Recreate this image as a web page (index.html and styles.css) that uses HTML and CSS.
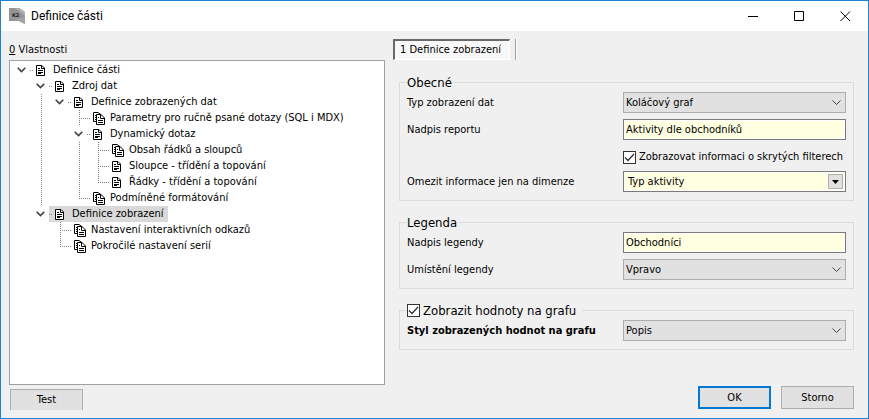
FILE: index.html
```html
<!DOCTYPE html>
<html lang="cs">
<head>
  <meta charset="utf-8">
  <meta name="viewport" content="width=device-width, initial-scale=1">
  <title>Definice části</title>
  <link rel="stylesheet" href="styles.css">
</head>
<body>
<svg class="defs" width="0" height="0" aria-hidden="true">
  <symbol id="doc" viewBox="0 0 13 13">
    <path d="M.5 1.500H6L8.500 4V11.500H.5Z" fill="#fff" stroke="#000"/>
    <path d="M5.500 2V4.500H8M2 4.500H4M2 6.500H7M2 8.500H7M2 9.500H5" fill="none" stroke="#000"/>
  </symbol>
  <symbol id="docs" viewBox="0 0 13 13">
    <path d="M.5 .5H5L8.500 3V9.500H.5Z" fill="#fff" stroke="#000"/>
    <path d="M2 3.500H3M2 5.500H3M2 7.500H3" stroke="#000"/>
    <path d="M3.500 2.500H8L11.500 6V12.500H3.500Z" fill="#fff" stroke="#000"/>
    <path d="M7.500 3V6.500H11M5 5.500H6M5 8.500H10M5 10.500H10" fill="none" stroke="#000"/>
  </symbol>
  <symbol id="open" viewBox="0 0 9 6">
    <path d="M.7 .8L4.500 4.600L8.300 .8" fill="none" stroke="#404040" stroke-width="1.600"/>
  </symbol>
</svg>

<div class="window">
  <header class="titlebar">
    <svg class="logo" width="16" height="16" viewBox="0 0 16 16">
      <path d="M0 0H10L16 4V16L10 13H0Z" fill="#949494"/>
      <path d="M0 0H10L16 4V8L6 0Z" fill="#adadad"/>
      <path d="M0 9L10 13L16 16V9L8 11Z" fill="#a3a3a3"/>
      <text x="3" y="9" class="logo-text">K2</text>
    </svg>
    <h1>Definice části</h1>
    <div class="window-buttons">
      <button type="button" aria-label="Minimalizovat">
        <svg width="11" height="11"><path d="M0 5.500H10" stroke="#000"/></svg>
      </button>
      <button type="button" aria-label="Maximalizovat">
        <svg width="11" height="11"><path d="M.5 .5H9.500V9.500H.5Z" fill="none" stroke="#000"/></svg>
      </button>
      <button type="button" aria-label="Zavřít">
        <svg width="11" height="11"><path d="M.5 .5L10 10M10 .5L.5 10" stroke="#000"/></svg>
      </button>
    </div>
  </header>

  <main class="content">
    <section class="left">
      <h2 class="caption"><u>0</u> Vlastnosti</h2>
      <div class="tree">
        <ul>
          <li>
            <div class="row parent"><i><svg><use href="#open"/></svg></i><span><svg><use href="#doc"/></svg>Definice části</span></div>
            <ul>
              <li>
                <div class="row parent"><i><svg><use href="#open"/></svg></i><span><svg><use href="#doc"/></svg>Zdroj dat</span></div>
                <ul>
                  <li>
                    <div class="row parent"><i><svg><use href="#open"/></svg></i><span><svg><use href="#doc"/></svg>Definice zobrazených dat</span></div>
                    <ul>
                      <li><div class="row"><i></i><span><svg><use href="#docs"/></svg>Parametry pro ručně psané dotazy (SQL i MDX)</span></div></li>
                      <li>
                        <div class="row parent"><i><svg><use href="#open"/></svg></i><span><svg><use href="#doc"/></svg>Dynamický dotaz</span></div>
                        <ul>
                          <li><div class="row"><i></i><span><svg><use href="#docs"/></svg>Obsah řádků a sloupců</span></div></li>
                          <li><div class="row"><i></i><span><svg><use href="#doc"/></svg>Sloupce - třídění a topování</span></div></li>
                          <li><div class="row"><i></i><span><svg><use href="#doc"/></svg>Řádky - třídění a topování</span></div></li>
                        </ul>
                      </li>
                      <li><div class="row"><i></i><span><svg><use href="#docs"/></svg>Podmíněné formátování</span></div></li>
                    </ul>
                  </li>
                </ul>
              </li>
              <li>
                <div class="row parent selected"><i><svg><use href="#open"/></svg></i><span><svg><use href="#doc"/></svg>Definice zobrazení</span></div>
                <ul>
                  <li><div class="row"><i></i><span><svg><use href="#docs"/></svg>Nastavení interaktivních odkazů</span></div></li>
                  <li><div class="row"><i></i><span><svg><use href="#docs"/></svg>Pokročilé nastavení serií</span></div></li>
                </ul>
              </li>
            </ul>
          </li>
        </ul>
      </div>
      <button type="button" class="btn btn-test">Test</button>
    </section>

    <form class="right">
      <div class="tabs">
        <button type="button" class="tab">1 Definice zobrazení</button>
      </div>

      <fieldset>
        <legend>Obecné</legend>
        <div class="field">
          <label for="typ">Typ zobrazení dat</label>
          <select id="typ"><option>Koláčový graf</option></select>
        </div>
        <div class="field">
          <label for="nadpis">Nadpis reportu</label>
          <input type="text" id="nadpis" value="Aktivity dle obchodníků">
        </div>
        <div class="field check-field">
          <label class="check"><input type="checkbox" checked>Zobrazovat informaci o skrytých filterech</label>
        </div>
        <div class="field">
          <label for="omezit">Omezit informace jen na dimenze</label>
          <select id="omezit" class="lookup"><option>Typ aktivity</option></select>
        </div>
      </fieldset>

      <fieldset>
        <legend>Legenda</legend>
        <div class="field">
          <label for="legenda">Nadpis legendy</label>
          <input type="text" id="legenda" value="Obchodníci">
        </div>
        <div class="field">
          <label for="umisteni">Umístění legendy</label>
          <select id="umisteni"><option>Vpravo</option></select>
        </div>
      </fieldset>

      <fieldset>
        <legend class="legend-check"><label class="check"><input type="checkbox" checked>Zobrazit hodnoty na grafu</label></legend>
        <div class="field">
          <label for="styl" class="strong">Styl zobrazených hodnot na grafu</label>
          <select id="styl"><option>Popis</option></select>
        </div>
      </fieldset>

      <div class="actions">
        <button type="submit" class="btn btn-ok">OK</button>
        <button type="button" class="btn">Storno</button>
      </div>
    </form>
  </main>
</div>
</body>
</html>
```

FILE: styles.css
```css
* {
  box-sizing: border-box;
}

body {
  margin: 0;
  font: 11px/16px Tahoma, "DejaVu Sans Condensed", sans-serif;
  color: #000;
}

button, input, select {
  margin: 0;
  font: inherit;
  color: inherit;
  border-radius: 0;
}

.defs {
  position: absolute;
}

.window {
  display: flex;
  flex-direction: column;
  min-height: 100vh;
  border: 1px solid #1883d7;
  background: #f0f0f0;
}

/* title bar */
.titlebar {
  display: flex;
  align-items: center;
  height: 30px;
  padding-left: 8px;
  background: #fff;
}

.titlebar h1 {
  flex: 1;
  margin: 0 0 0 6px;
  font: 12px/16px "Segoe UI", Roboto, sans-serif;
}

.logo-text {
  font: bold 5px "DejaVu Sans", sans-serif;
  fill: #222;
}

.window-buttons {
  display: flex;
}

.window-buttons button {
  width: 46px;
  height: 28px;
  padding: 0;
  border: 0;
  background: none;
}

.window-buttons svg {
  display: block;
  margin: 0 auto;
}

/* layout */
.content {
  flex: 1;
  display: grid;
  grid-template-columns: 376fr 461fr;
  gap: 8px;
  padding: 8px 14px 8px 8px;
}

.left {
  display: flex;
  flex-direction: column;
}

.caption {
  margin: 3px 0 2px;
  font: inherit;
}

/* tree */
.tree {
  flex: 1;
  margin-bottom: 4px;
  padding: 1px 2px;
  border: 1px solid #a0a0a0;
  background: #fff;
}

.tree ul {
  margin: 0;
  padding: 0;
  list-style: none;
}

.tree ul ul {
  padding-left: 19px;
}

.tree li {
  background: repeating-linear-gradient(#808080 0 1px, transparent 1px 2px) 10px 0 / 1px 100% no-repeat;
}

.tree li:last-child {
  background-size: 1px 8px;
}

.row {
  display: flex;
  height: 16px;
  white-space: nowrap;
}

.row i {
  width: 22px;
  background: repeating-linear-gradient(90deg, #808080 0 1px, transparent 1px 2px) 10px 8px / 12px 1px no-repeat;
}

.row.parent i {
  width: 18px;
  background: #fff;
}

.row i svg {
  display: block;
  width: 9px;
  height: 6px;
  margin: 5px 0 0 5px;
}

.row span {
  display: flex;
  padding-right: 4px;
}

.row.parent span {
  padding-left: 4px;
  background: repeating-linear-gradient(90deg, #808080 0 1px, transparent 1px 2px) 0 8px / 4px 1px no-repeat;
}

.row.selected span {
  background-color: #d9d9d9;
}

.row span svg {
  width: 13px;
  height: 13px;
  margin: 2px 4px 0 2px;
}

/* right side */
.right {
  display: flex;
  flex-direction: column;
  padding-bottom: 1px;
}

.tabs {
  display: flex;
  align-self: flex-start;
  margin-bottom: 14px;
  padding-right: 5px;
  border-right: 1px solid #a0a0a0;
  box-shadow: 1px 0 #fff;
}

.tab {
  height: 21px;
  padding: 0 8px 0 5px;
  border: 1px solid #fff;
  border-top: 2px solid #696969;
  border-left: 2px solid #696969;
  background: #f8f8f8;
}

fieldset {
  display: grid;
  gap: 6px;
  min-width: 0;
  margin: 0 0 13px 6px;
  padding: 1px 7px 8px;
  border: 1px solid #dcdcdc;
}

legend {
  padding: 0 1px 0 0;
  font-size: 13px;
  line-height: 17px;
}

.legend-check {
  padding-right: 6px;
}

.field {
  display: grid;
  grid-template-columns: 216fr 223fr;
  align-items: center;
}

.field label {
  min-width: 0;
  white-space: nowrap;
}

.check-field {
  padding-top: 3px;
}

.check-field .check {
  grid-column: 2;
}

.strong {
  font-weight: bold;
}

.check {
  display: flex;
  align-items: center;
  gap: 3px;
}

.check input {
  appearance: none;
  flex: none;
  width: 13px;
  height: 13px;
  border: 1px solid #333;
  background: #fff;
}

.check input:checked {
  background: #fff url("data:image/svg+xml,%3Csvg xmlns='http://www.w3.org/2000/svg' width='11' height='11'%3E%3Cpath d='M1 5.5L4 8.500L10 2' fill='none' stroke='%23333' stroke-width='1.300'/%3E%3C/svg%3E") center no-repeat;
}

.field select,
.field input[type="text"] {
  width: 100%;
  height: 21px;
  padding: 0 2px;
  border: 1px solid #7a7a7a;
  background: #ffffe1;
  box-shadow: inset 0 0 0 1px #fff;
}

.field select {
  appearance: none;
  border-color: #adadad;
  background: #e1e1e1 url("data:image/svg+xml,%3Csvg xmlns='http://www.w3.org/2000/svg' width='9' height='6'%3E%3Cpath d='M.5 .5L4.500 4.500L8.500 .5' fill='none' stroke='%23444'/%3E%3C/svg%3E") right 4px center no-repeat;
  box-shadow: none;
}

.field .lookup {
  padding-left: 4px;
  border-color: #7a7a7a;
  background: #ffffe1 url("data:image/svg+xml,%3Csvg xmlns='http://www.w3.org/2000/svg' width='15' height='15'%3E%3Cpath d='M.5 .5H14.500V14.500H.5Z' fill='%23e1e1e1' stroke='%23adadad'/%3E%3Cpath d='M4 6H11L7.500 10Z'/%3E%3C/svg%3E") right 2px center no-repeat;
  box-shadow: inset 0 0 0 1px #fff;
}

/* buttons */
.btn {
  width: 73px;
  height: 23px;
  padding: 0;
  border: 1px solid #adadad;
  background: #e1e1e1;
}

.btn-ok {
  border: 2px solid #0078d7;
}

.btn-test {
  height: 21px;
  margin-left: 1px;
  border-bottom: 0;
}

.actions {
  display: flex;
  justify-content: flex-end;
  gap: 10px;
  margin-top: auto;
}
```
